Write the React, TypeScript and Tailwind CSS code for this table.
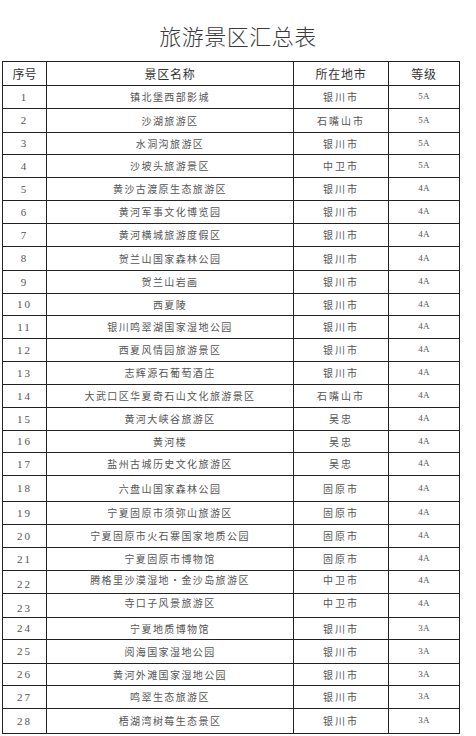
import React from 'react';

interface Spot {
  no: number;
  name: string;
  city: string;
  grade: string;
  h: number;
}

const spots: Spot[] = [
  { no: 1, name: '镇北堡西部影城', city: '银川市', grade: '5A', h: 23 },
  { no: 2, name: '沙湖旅游区', city: '石嘴山市', grade: '5A', h: 24 },
  { no: 3, name: '水洞沟旅游区', city: '银川市', grade: '5A', h: 22 },
  { no: 4, name: '沙坡头旅游景区', city: '中卫市', grade: '5A', h: 23 },
  { no: 5, name: '黄沙古渡原生态旅游区', city: '银川市', grade: '4A', h: 23 },
  { no: 6, name: '黄河军事文化博览园', city: '银川市', grade: '4A', h: 23 },
  { no: 7, name: '黄河横城旅游度假区', city: '银川市', grade: '4A', h: 23 },
  { no: 8, name: '贺兰山国家森林公园', city: '银川市', grade: '4A', h: 24 },
  { no: 9, name: '贺兰山岩画', city: '银川市', grade: '4A', h: 23 },
  { no: 10, name: '西夏陵', city: '银川市', grade: '4A', h: 22 },
  { no: 11, name: '银川鸣翠湖国家湿地公园', city: '银川市', grade: '4A', h: 23 },
  { no: 12, name: '西夏风情园旅游景区', city: '银川市', grade: '4A', h: 23 },
  { no: 13, name: '志辉源石葡萄酒庄', city: '银川市', grade: '4A', h: 23 },
  { no: 14, name: '大武口区华夏奇石山文化旅游景区', city: '石嘴山市', grade: '4A', h: 23 },
  { no: 15, name: '黄河大峡谷旅游区', city: '吴忠', grade: '4A', h: 23 },
  { no: 16, name: '黄河楼', city: '吴忠', grade: '4A', h: 22 },
  { no: 17, name: '盐州古城历史文化旅游区', city: '吴忠', grade: '4A', h: 23 },
  { no: 18, name: '六盘山国家森林公园', city: '固原市', grade: '4A', h: 26 },
  { no: 19, name: '宁夏固原市须弥山旅游区', city: '固原市', grade: '4A', h: 23 },
  { no: 20, name: '宁夏固原市火石寨国家地质公园', city: '固原市', grade: '4A', h: 23 },
  { no: 21, name: '宁夏固原市博物馆', city: '固原市', grade: '4A', h: 23 },
  { no: 22, name: '腾格里沙漠湿地·金沙岛旅游区', city: '中卫市', grade: '4A', h: 23 },
  { no: 23, name: '寺口子风景旅游区', city: '中卫市', grade: '4A', h: 24 },
  { no: 24, name: '宁夏地质博物馆', city: '银川市', grade: '3A', h: 22 },
  { no: 25, name: '阅海国家湿地公园', city: '银川市', grade: '3A', h: 24 },
  { no: 26, name: '黄河外滩国家湿地公园', city: '银川市', grade: '3A', h: 22 },
  { no: 27, name: '鸣翠生态旅游区', city: '银川市', grade: '3A', h: 23 },
  { no: 28, name: '梧湖湾树莓生态景区', city: '银川市', grade: '3A', h: 25 },
];

const font = { fontFamily: '"Noto Sans CJK SC", "Noto Sans", sans-serif' };
const serif = { fontFamily: '"Liberation Serif", "DejaVu Serif", serif' };

export default function App() {
  return (
    <div className="w-[476px] h-[736px] bg-white overflow-hidden" style={font}>
      <h1 className="pt-[23px] h-[61px] text-center text-[22px] leading-[24px] font-light tracking-[0.5px] text-[#3a3a3a]">
        旅游景区汇总表
      </h1>
      <table className="ml-[2px] table-fixed border-collapse border border-[#222] text-[#555]">
        <colgroup>
          <col className="w-[44px]" />
          <col className="w-[247px]" />
          <col className="w-[95px]" />
          <col className="w-[71px]" />
        </colgroup>
        <thead>
          <tr className="h-[24px] text-[12px] text-[#333]">
            <th className="border border-[#222] font-normal p-0">序号</th>
            <th className="border border-[#222] font-normal p-0 tracking-[0.7px]">景区名称</th>
            <th className="border border-[#222] font-normal p-0 tracking-[0.7px]">所在地市</th>
            <th className="border border-[#222] font-normal p-0 tracking-[0.7px]">等级</th>
          </tr>
        </thead>
        <tbody>
          {spots.map((s) => {
            const top = s.no === 22 || s.no === 23;
            return (
              <tr key={s.no} style={{ height: s.h }}>
                <td
                  className={`border border-[#222] p-0 text-center text-[11px] tracking-[2px] ${top ? 'align-bottom pb-[1px]' : 'align-middle'}`}
                  style={serif}
                >
                  {s.no}
                </td>
                <td
                  className={`border border-[#222] p-0 text-center text-[10px] tracking-[1.4px] leading-[14px] ${top ? 'align-top pt-[2px]' : 'align-middle'}`}
                >
                  {s.name}
                </td>
                <td
                  className={`border border-[#222] p-0 text-center text-[10px] tracking-[2px] leading-[14px] ${top ? 'align-top pt-[2px]' : 'align-middle'}`}
                >
                  {s.city}
                </td>
                <td
                  className={`border border-[#222] p-0 text-center text-[9px] tracking-[0.3px] ${top ? 'align-top pt-[3px]' : 'align-middle'}`}
                  style={serif}
                >
                  {s.grade}
                </td>
              </tr>
            );
          })}
        </tbody>
      </table>
    </div>
  );
}
